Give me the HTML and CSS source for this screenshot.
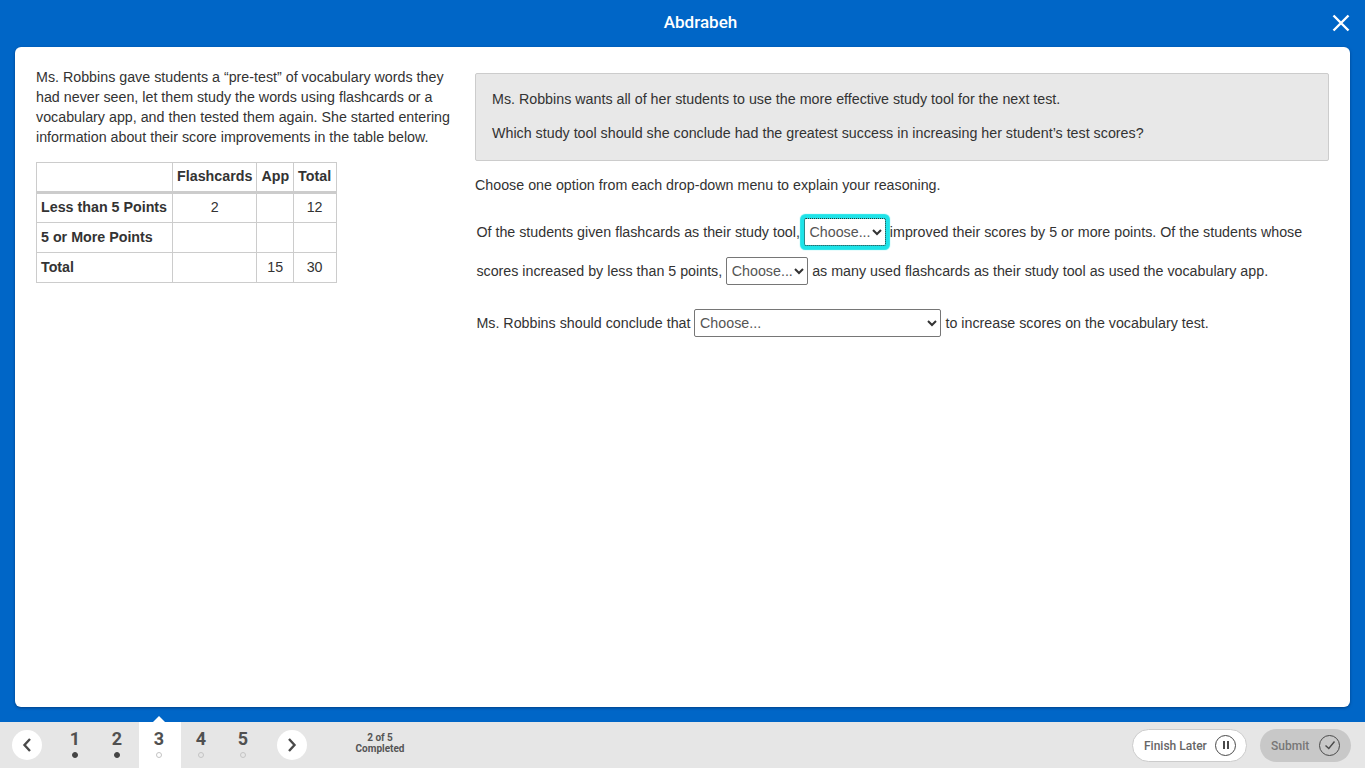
FILE: index.html
```html
<!DOCTYPE html>
<html lang="en">
<head>
<meta charset="utf-8">
<title>Abdrabeh</title>
<link rel="stylesheet" href="styles.css">
</head>
<body>
<header class="topbar">
  <h1 class="title">Abdrabeh</h1>
  <button class="close" aria-label="Close">
    <svg width="18" height="18" viewBox="0 0 18 18"><path d="M1.5 1.5 16.5 16.5M16.5 1.5 1.5 16.5" stroke="#fff" stroke-width="2.4" fill="none"/></svg>
  </button>
</header>
<main class="panel">
  <section class="left">
    <p class="intro">Ms. Robbins gave students a “pre-test” of vocabulary words they had never seen, let them study the words using flashcards or a vocabulary app, and then tested them again. She started entering information about their score improvements in the table below.</p>
    <table class="data">
      <thead>
        <tr><th></th><th>Flashcards</th><th>App</th><th>Total</th></tr>
      </thead>
      <tbody>
        <tr><th>Less than 5 Points</th><td>2</td><td></td><td>12</td></tr>
        <tr><th>5 or More Points</th><td></td><td></td><td></td></tr>
        <tr><th>Total</th><td></td><td>15</td><td>30</td></tr>
      </tbody>
    </table>
  </section>
  <section class="right">
    <div class="prompt">
      <p>Ms. Robbins wants all of her students to use the more effective study tool for the next test.</p>
      <p>Which study tool should she conclude had the greatest success in increasing her student’s test scores?</p>
    </div>
    <p class="instr">Choose one option from each drop-down menu to explain your reasoning.</p>
    <p class="para">Of the students given flashcards as their study tool, <select class="sel sel-focus"><option>Choose...</option></select> improved their scores by 5 or more points. Of the students whose scores increased by less than 5 points, <select class="sel"><option>Choose...</option></select> as many used flashcards as their study tool as used the vocabulary app.</p>
    <p class="para para-last">Ms. Robbins should conclude that <select class="sel sel-wide"><option>Choose...</option></select> to increase scores on the vocabulary test.</p>
  </section>
</main>
<footer class="bottombar">
  <button class="round nav-prev" aria-label="Previous">
    <svg width="12" height="16" viewBox="0 0 12 16"><path d="M9 2 3.500 8 9 14" stroke="#4a4a4a" stroke-width="2.400" fill="none"/></svg>
  </button>
  <ol class="steps">
    <li class="step"><span class="num">1</span><span class="dot done"></span></li>
    <li class="step"><span class="num">2</span><span class="dot done"></span></li>
    <li class="step current"><span class="num">3</span><span class="dot"></span></li>
    <li class="step"><span class="num">4</span><span class="dot"></span></li>
    <li class="step"><span class="num">5</span><span class="dot"></span></li>
  </ol>
  <button class="round nav-next" aria-label="Next">
    <svg width="12" height="16" viewBox="0 0 12 16"><path d="M3 2 8.500 8 3 14" stroke="#4a4a4a" stroke-width="2.400" fill="none"/></svg>
  </button>
  <div class="progress">2 of 5<br>Completed</div>
  <button class="pill later"><span class="pill-label">Finish Later</span>
    <span class="ring"><svg width="10" height="10" viewBox="0 0 10 10"><path d="M3 1v8M7 1v8" stroke="#4a4a4a" stroke-width="2" fill="none"/></svg></span>
  </button>
  <button class="pill submit"><span class="pill-label">Submit</span>
    <span class="ring"><svg width="12" height="12" viewBox="0 0 12 12"><path d="M1.500 6.500 4.800 9.500 10.500 2.500" stroke="#4a4a4a" stroke-width="1.400" fill="none"/></svg></span>
  </button>
</footer>
</body>
</html>
```
FILE: styles.css
```css
* { box-sizing: border-box; }
html, body { height: 100%; }
body {
  margin: 0;
  height: 768px;
  overflow: hidden;
  background: #0066c7;
  display: flex;
  flex-direction: column;
  font-family: "Liberation Sans", Arial, sans-serif;
  font-size: 14.28px;
  color: #333;
}
p { margin: 0; }

.topbar {
  height: 47px;
  flex: none;
  position: relative;
  display: flex;
  align-items: center;
  justify-content: center;
  padding-left: 36px;
  padding-bottom: 3px;
}
.title {
  margin: 0;
  color: #fff;
  font-family: Roboto, sans-serif;
  font-size: 17px;
  font-weight: 500;
}
.close {
  position: absolute;
  right: 15px;
  top: 14px;
  width: 18px;
  height: 18px;
  padding: 0;
  border: 0;
  background: none;
  display: flex;
}

.panel {
  flex: none;
  height: 660px;
  margin: 0 15px 15px;
  background: #fff;
  border-radius: 6px;
  box-shadow: 0 1px 3px rgba(0, 40, 90, .6);
  display: flex;
  padding: 20px 21px 0;
  gap: 21px;
}
.left { width: 418px; flex: none; }
.intro { line-height: 20px; }
.data {
  margin-top: 15px;
  border-collapse: collapse;
  line-height: 20px;
}
.data th, .data td {
  border: 1px solid #ccc;
  padding: 3px 4px 5px;
  height: 30px;
  text-align: center;
}
.data th:last-child, .data td:last-child { padding-right: 5px; }
.data tbody th { text-align: left; padding-right: 5px; }
.data thead th { border-bottom: 3px solid #ccc; }
.data thead th:first-child { padding-right: 5px; }

.right { flex: 1; padding-top: 6px; }
.prompt {
  height: 88px;
  background: #e8e8e8;
  border: 1px solid #ccc;
  border-radius: 2px;
  padding: 15px 16px;
  display: flex;
  flex-direction: column;
  gap: 14px;
  line-height: 20px;
}
.instr { margin-top: 14px; line-height: 20px; }
.para {
  margin-top: 18px;
  padding-left: 1.4px;
  line-height: 39px;
}
.para-last { margin-top: 13px; }
.sel {
  appearance: none;
  font: inherit;
  line-height: 26px;
  color: #555;
  background: #fff url("data:image/svg+xml,%3Csvg xmlns='http://www.w3.org/2000/svg' width='10' height='8' viewBox='0 0 10 8'%3E%3Cpath d='M1 2l4 4 4-4' stroke='%23333' stroke-width='2' fill='none'/%3E%3C/svg%3E") no-repeat right 3px center;
  border: 1px solid #767676;
  border-radius: 2px;
  height: 28px;
  width: 82px;
  padding: 0 0 0 4.6px;
  vertical-align: baseline;
}
.sel-wide { width: 247px; }
.sel-focus {
  outline: 1px dotted #333;
  outline-offset: -1px;
  border-color: #1de3e8;
  border-radius: 2px;
  box-shadow: 0 0 1px 3.5px #1de3e8;
}

.bottombar {
  flex: none;
  height: 46px;
  background: #e6e6e6;
  display: flex;
  align-items: center;
  padding: 0 14px 0 12px;
  font-family: Roboto, sans-serif;
}
.round {
  width: 30px;
  height: 30px;
  border: 0;
  border-radius: 50%;
  background: #fff;
  padding: 0;
  display: flex;
  align-items: center;
  justify-content: center;
  flex: none;
}
.steps {
  list-style: none;
  margin: 0 0 0 13px;
  padding: 0;
  display: flex;
  height: 46px;
}
.step {
  width: 42px;
  display: flex;
  flex-direction: column;
  align-items: center;
  padding: 6px 2px 0 0;
  color: #505050;
  font-size: 18px;
  font-weight: 700;
  line-height: 21px;
  position: relative;
}
.current { background: #fff; }
.current::before {
  content: "";
  position: absolute;
  top: -6px;
  left: 14px;
  border-left: 6px solid transparent;
  border-right: 6px solid transparent;
  border-bottom: 6px solid #fff;
}
.dot {
  width: 6px;
  height: 6px;
  margin-top: 3px;
  border-radius: 50%;
  border: 1px solid #c4c4c4;
}
.dot.done { background: #444; border-color: #444; }
.nav-next { margin-left: 12px; }
.progress {
  margin-left: 33px;
  margin-bottom: 4px;
  width: 80px;
  text-align: center;
  font-size: 10px;
  font-weight: 700;
  line-height: 11px;
  color: #555;
}
.pill {
  height: 33px;
  border-radius: 17px;
  display: flex;
  align-items: center;
  justify-content: space-between;
  border: 0;
  font-family: Roboto, sans-serif;
  font-size: 12px;
  font-weight: 500;
  color: #666;
  flex: none;
}
.pill-label { padding-top: 2px; }
.later {
  width: 115px;
  margin-left: auto;
  background: #fff;
  border: 1px solid #ccc;
  padding: 0 10px 0 11px;
}
.submit {
  width: 91px;
  margin-left: 13px;
  background: #c8c8c8;
  padding: 0 11px;
  color: #777;
}
.ring {
  width: 21px;
  height: 21px;
  border: 1px solid #4a4a4a;
  border-radius: 50%;
  display: flex;
  align-items: center;
  justify-content: center;
}
```
